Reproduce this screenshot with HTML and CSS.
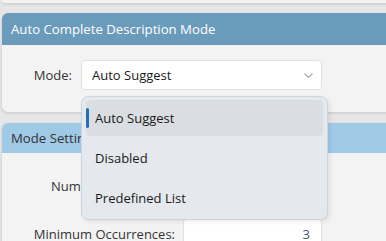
FILE: index.html
```html
<!DOCTYPE html>
<html lang="en">
<head>
    <meta charset="UTF-8">
    <title>Auto Complete Settings</title>
    <link rel="stylesheet" href="styles.css">
</head>
<body>
    <div class="page">
        <div class="card-tail"></div>

        <div class="card">
            <div class="card-header">Auto Complete Description Mode</div>
            <div class="card-body mode-body">
                <div class="row">
                    <label class="mode-label">Mode:</label>
                    <div class="select">
                        <span class="select-value">Auto Suggest</span>
                        <svg class="chevron" width="9" height="5" viewBox="0 0 9 5">
                            <path d="M0.5 0.5 L4.5 4.5 L8.5 0.5" fill="none" stroke="#aaa" stroke-width="1.1"/>
                        </svg>
                        <div class="popup">
                            <div class="option selected">Auto Suggest</div>
                            <div class="option">Disabled</div>
                            <div class="option">Predefined List</div>
                        </div>
                    </div>
                </div>
            </div>
        </div>

        <div class="card">
            <div class="card-header light">Mode Settings</div>
            <div class="card-body settings-body">
                <div class="row">
                    <label class="setting-label">Number of Matches:</label>
                    <div class="num-input">5</div>
                </div>
                <div class="row">
                    <label class="setting-label">Minimum Occurrences:</label>
                    <div class="num-input">3</div>
                </div>
            </div>
        </div>
    </div>
</body>
</html>
```

FILE: styles.css
```css
body {
    margin: 0;
    background-color: #e6e6e6;
    font-family: "Open Sans", "Noto Sans", sans-serif;
    font-size: 13px;
    color: #333;
    overflow: hidden;
}
.page {
    width: 440px;
    padding-left: 2px;
}
.card-tail {
    height: 3px;
    background-color: #f3f3f3;
    border-radius: 0 0 6px 6px;
    box-shadow: 0 1px 3px rgba(0, 0, 0, 0.15);
    margin-bottom: 10px;
}
.card {
    background-color: #f3f3f3;
    border-radius: 6px;
    box-shadow: 0 1px 3px rgba(0, 0, 0, 0.15);
    margin-bottom: 11px;
}
.card-header {
    height: 32px;
    line-height: 32px;
    padding-left: 9px;
    background-color: #6a9bbb;
    color: #ffffff;
    font-size: 13.2px;
    border-radius: 6px 6px 0 0;
}
.card-header.light {
    height: 30px;
    line-height: 30px;
    background-color: #9fc9e5;
    color: #333;
}
.row {
    display: flex;
    align-items: center;
}
.mode-body {
    padding: 15px 0 22px;
}
.mode-label {
    width: 70px;
    margin-right: 9px;
    text-align: right;
}
.select {
    position: relative;
    box-sizing: border-box;
    width: 241px;
    height: 30px;
    padding: 0 8px 0 10px;
    display: flex;
    align-items: center;
    justify-content: space-between;
    background-color: #ffffff;
    border: 1px solid #e1e1e1;
    border-radius: 4px;
    color: #1a1a1a;
}
.popup {
    position: absolute;
    top: 35px;
    left: -1px;
    box-sizing: border-box;
    width: 247px;
    padding: 3px 4px;
    background-color: #e5e9ed;
    border: 1px solid #c9d5e1;
    border-radius: 7px;
    box-shadow: 2px 2px 4px rgba(0, 0, 0, 0.08);
    display: flex;
    flex-direction: column;
    gap: 4px;
    z-index: 2;
}
.option {
    position: relative;
    height: 36px;
    line-height: 36px;
    padding-left: 9px;
    border-radius: 4px;
    color: #1a1a1a;
}
.option.selected {
    background-color: #dadee2;
}
.option.selected::before {
    content: "";
    position: absolute;
    left: 0;
    top: 8px;
    width: 3px;
    height: 20px;
    border-radius: 2px;
    background-color: #1f6fbd;
}
.settings-body {
    padding: 18px 0 20px;
    display: flex;
    flex-direction: column;
    gap: 18px;
}
.setting-label {
    width: 173px;
    margin-right: 8px;
    text-align: right;
}
.num-input {
    box-sizing: border-box;
    width: 139px;
    height: 30px;
    line-height: 28px;
    padding-right: 11px;
    text-align: right;
    background-color: #ffffff;
    border: 1px solid #e1e1e1;
    border-radius: 3px;
    color: #4a5a70;
}
```
